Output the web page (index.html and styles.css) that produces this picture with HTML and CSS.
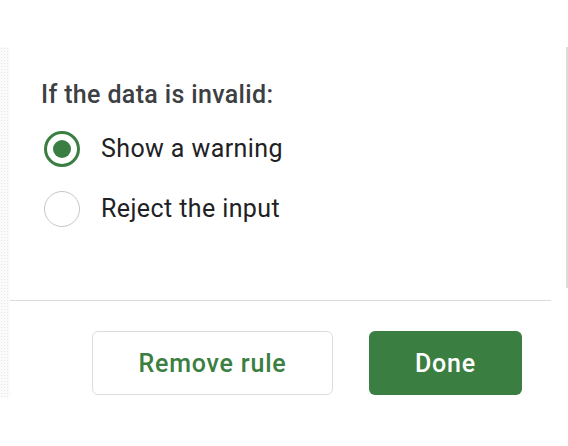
FILE: index.html
```html
<!DOCTYPE html>
<html lang="en">
<head>
  <meta charset="UTF-8">
  <meta name="viewport" content="width=device-width, initial-scale=1.0">
  <title>Data validation</title>
  <link rel="stylesheet" href="styles.css">
</head>
<body>
  <div class="sheet">
    <div class="gutter"></div>

    <div class="dialog">
      <div class="dialog-body">
        <h2 class="label">If the data is invalid:</h2>
        <label class="option">
          <span class="radio checked"></span>
          <span class="option-text">Show a warning</span>
        </label>
        <label class="option">
          <span class="radio"></span>
          <span class="option-text">Reject the input</span>
        </label>
      </div>

      <div class="dialog-footer">
        <button class="button outline">Remove rule</button>
        <button class="button primary">Done</button>
      </div>
    </div>
  </div>
</body>
</html>
```

FILE: styles.css
```css
body {
  margin: 0;
  padding: 0;
  background-color: #ffffff;
  font-family: Roboto, "Noto Sans", Arial, sans-serif;
  color: #202124;
}

.sheet {
  display: flex;
  margin-top: 47px;
}

.gutter {
  width: 10px;
  height: 351px;
  background-color: #fbfbfb;
  background-image: radial-gradient(#e6e6e6 0.6px, transparent 0.8px);
  background-size: 3px 3px;
}

.dialog {
  flex: 1;
  display: flex;
  flex-direction: column;
}

.dialog-body {
  height: 241px;
  padding-left: 31px;
  padding-top: 33px;
  box-sizing: border-box;
  border-right: 2px solid #dadce0;
}

.label {
  margin: 0 0 9px;
  font-size: 25px;
  font-weight: 500;
  line-height: 30px;
  letter-spacing: 0.35px;
  color: #3c4043;
}

.option {
  display: flex;
  align-items: center;
  gap: 21px;
  height: 60px;
  padding-left: 3px;
}

.radio {
  width: 36px;
  height: 36px;
  border-radius: 50%;
  border: 1px solid #c6c6c6;
  box-sizing: border-box;
  position: relative;
  flex-shrink: 0;
}

.radio.checked {
  border: 3px solid #3b7e42;
}

.radio.checked::after {
  content: "";
  position: absolute;
  top: 6px;
  left: 6px;
  width: 18px;
  height: 18px;
  border-radius: 50%;
  background-color: #3b7e42;
}

.option-text {
  font-size: 25px;
  line-height: 30px;
  letter-spacing: 0.4px;
  color: #202124;
}

.dialog-footer {
  margin-top: 12px;
  margin-right: 17px;
  border-top: 1px solid #dadce0;
  padding: 30px 29px 0 0;
  display: flex;
  justify-content: flex-end;
  gap: 36px;
}

.button {
  height: 64px;
  border-radius: 6px;
  font-family: Roboto, "Noto Sans", Arial, sans-serif;
  font-size: 25px;
  font-weight: 500;
  letter-spacing: 0.8px;
  cursor: pointer;
}

.button.outline {
  width: 241px;
  background-color: #ffffff;
  border: 1px solid #dadce0;
  color: #3b7e42;
}

.button.primary {
  width: 153px;
  background-color: #3b7e42;
  border: none;
  color: #ffffff;
}
```
